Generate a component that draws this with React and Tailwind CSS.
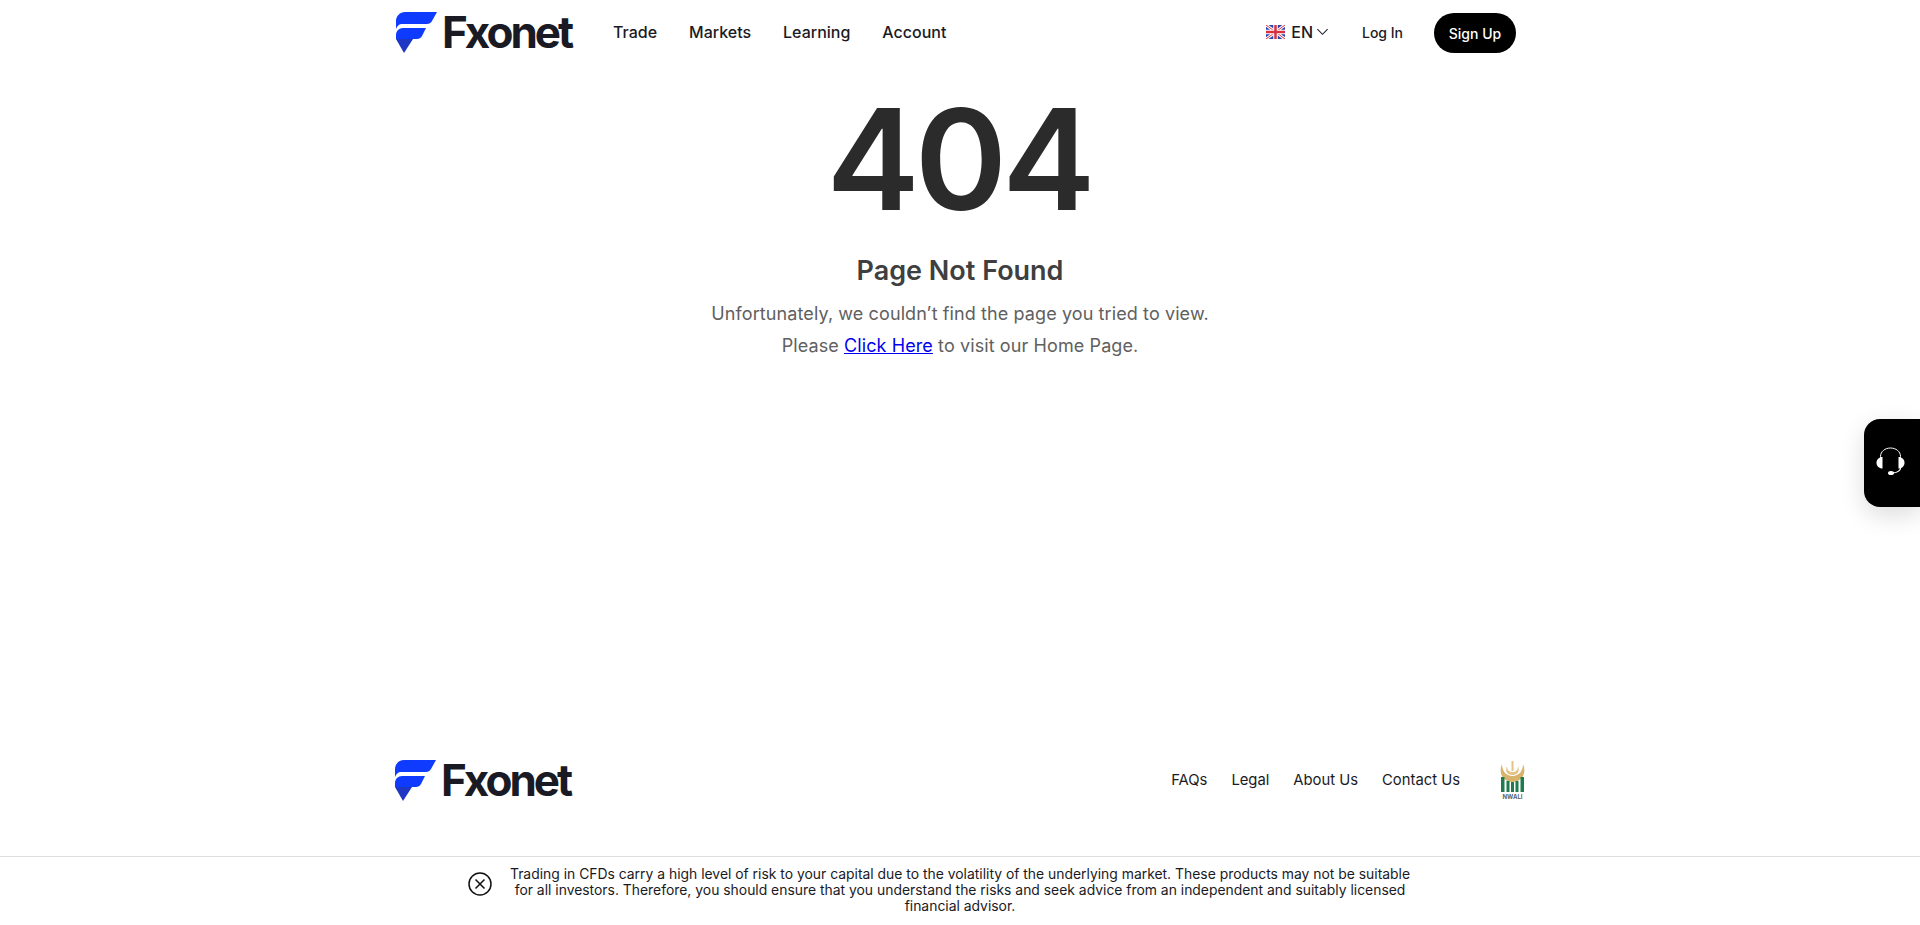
import React from "react";

const FONT = "font-['Inter','Liberation_Sans',sans-serif]";

function LogoMark() {
  return (
    <svg width="41" height="41" viewBox="0 0 41 41" className="shrink-0">
      <path d="M9 0H41L36 9C35 11 33 12 31 12H6C3 12 1 14 0 17V9C0 4 4 0 9 0Z" fill="#0F3BFF" />
      <path d="M7 16H30L26 24C25 26 23 27 21 27H0V23C0 19 3 16 7 16Z" fill="#0F3BFF" />
      <path d="M0 27H17L8 41Z" fill="#1D36C4" />
    </svg>
  );
}

function Logo() {
  return (
    <div className="flex items-center gap-[5px] w-[178px] h-[41px] shrink-0">
      <LogoMark />
      <span className={`text-[44px] leading-[41px] font-bold tracking-[-3px] text-[#1a1a24] ${FONT}`}>Fxonet</span>
    </div>
  );
}

function Flag() {
  return (
    <svg width="19" height="14" viewBox="0 0 19 14" className="shrink-0">
      <rect width="19" height="14" rx="3" fill="#2b46b0" />
      <path d="M0 0L19 14M19 0L0 14" stroke="#fff" strokeWidth="3" />
      <path d="M0 0L19 14M19 0L0 14" stroke="#d6323f" strokeWidth="1" />
      <path d="M9.5 0V14M0 7H19" stroke="#fff" strokeWidth="4.5" />
      <path d="M9.5 0V14M0 7H19" stroke="#d6323f" strokeWidth="2.5" />
    </svg>
  );
}

function Nwali() {
  return (
    <svg width="30" height="42" viewBox="0 0 30 42" className="shrink-0">
      <path d="M5 4C1 13 6 22 15.500 22C25 22 30 13 26 4C26 11 22 16 15.500 16C9 16 5 11 5 4Z" fill="#d9b36c" />
      <path d="M10 6C8 11 10 15 15.500 15C21 15 23 11 21 6C21 10 19 12 15.500 12C12 12 10 10 10 6Z" fill="#e3c284" />
      <rect x="14.500" y="1" width="2" height="10" fill="#e3c284" />
      <path d="M4 17H7.500V32H4ZM9.500 21H12.500V32H9.500ZM14 22H17V32H14ZM18.500 21H21.500V32H18.500ZM23.500 17H27V32H23.500Z" fill="#1f7a4f" />
      <text x="15.500" y="38.500" textAnchor="middle" fontSize="6" fontWeight="700" fill="#5a5f68" fontFamily="Inter, sans-serif">NWALI</text>
    </svg>
  );
}

export default function App() {
  return (
    <div className={`min-h-[925px] h-[925px] bg-white flex flex-col overflow-hidden relative ${FONT}`}>
      <header className="w-[1120px] ml-[396px] h-[64px] shrink-0 flex items-center justify-between">
        <div className="flex items-center">
          <Logo />
          <nav className="flex items-center gap-[32px] ml-[39px] text-[16px] font-[450] text-[#1a1a24]">
            <a>Trade</a>
            <a>Markets</a>
            <a>Learning</a>
            <a>Account</a>
          </nav>
        </div>
        <div className="flex items-center">
          <div className="flex items-center text-[#1a1a24]">
            <Flag />
            <span className="ml-[6px] text-[16px] font-[450]">EN</span>
            <svg width="13" height="8" viewBox="0 0 14 8" className="ml-[3px]" fill="none" stroke="#1a1a24" strokeWidth="1.1">
              <path d="M1.5 1L7 6.5L12.5 1" />
            </svg>
          </div>
          <a className="ml-[33px] text-[14px] font-[450] text-[#1a1a24]">Log In</a>
          <a className="ml-[31px] translate-y-px w-[82px] h-[40px] rounded-full bg-black text-white text-[14px] font-[450] flex items-center justify-center">Sign Up</a>
        </div>
      </header>

      <main className="flex-1 flex flex-col items-center">
        <h1 className="text-[140px] leading-[165px] font-semibold text-[#2b2b2b] mt-[13px] mr-[3px] tracking-[-5px]">404</h1>
        <h2 className="mt-[12px] text-[27px] leading-[34px] font-semibold text-[#3f3f3f]">Page Not Found</h2>
        <p className="mt-[10px] text-[18px] leading-[32px] font-[375] tracking-[0.1px] text-[#606060] text-center">
          Unfortunately, we couldn’t find the page you tried to view.
          <br />
          Please <a className="text-[#0000ee] underline">Click Here</a> to visit our Home Page.
        </p>
      </main>

      <footer className="shrink-0 h-[96px] w-[1132px] ml-[395px] flex items-start justify-between">
        <Logo />
        <div className="flex items-center h-[41px]">
          <nav className="flex items-center gap-[24px] text-[14.8px] text-[#1a1a24]">
            <a>FAQs</a>
            <a>Legal</a>
            <a>About Us</a>
            <a>Contact Us</a>
          </nav>
          <div className="ml-[37px]"><Nwali /></div>
        </div>
      </footer>

      <div className="shrink-0 h-[69px] border-t border-[#dedede] flex items-start pl-[468px] pt-[9px]">
        <svg width="24" height="24" viewBox="0 0 24 24" fill="none" stroke="#111" strokeWidth="1.5" className="shrink-0 mr-[15px] mt-[6px]">
          <circle cx="12" cy="12" r="11" />
          <path d="M7.5 7.5L16.5 16.5M16.5 7.5L7.5 16.5" />
        </svg>
        <p className="w-[906px] text-[13.9px] leading-[16px] text-[#1a1a24] text-center">
          Trading in CFDs carry a high level of risk to your capital due to the volatility of the underlying market. These products may not be suitable for all investors. Therefore, you should ensure that you understand the risks and seek advice from an independent and suitably licensed financial advisor.
        </p>
      </div>

      <div className="absolute right-0 top-[419px] w-[56px] h-[88px] bg-black rounded-l-[16px] shadow-[0_8px_24px_rgba(0,0,0,0.14)] flex items-start pl-[12px] pt-[28px]">
        <svg width="29" height="28" viewBox="0 0 29 28" fill="none">
          <path d="M4.5 11V9.5C4.5 4.5 9 1 14.5 1C20 1 24.500 4.500 24.500 9.500V11" stroke="#fff" strokeWidth="1" />
          <path d="M25 20C24.500 23.500 21.500 25.500 17 26" stroke="#fff" strokeWidth="1.1" />
          <path d="M6.500 10V21.500C3 21.500 0.500 19 0.500 15.700C0.500 12.500 3 10 6.500 10Z" fill="#fff" />
          <path d="M22.500 10V21.500C26 21.500 28.500 19 28.500 15.700C28.500 12.500 26 10 22.500 10Z" fill="#fff" />
          <ellipse cx="15" cy="26" rx="3" ry="2" fill="#fff" />
        </svg>
      </div>
    </div>
  );
}
